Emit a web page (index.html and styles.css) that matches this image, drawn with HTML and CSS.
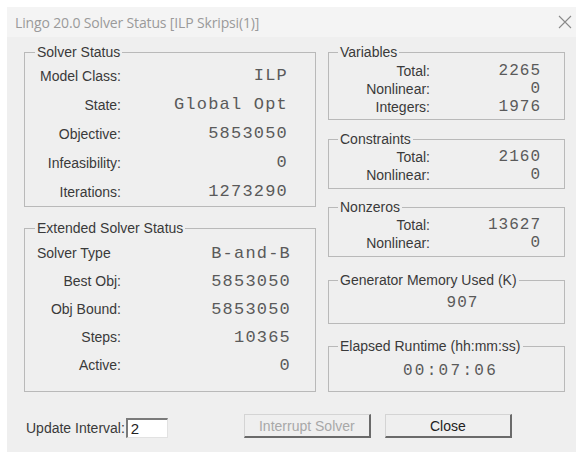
FILE: index.html
```html
<!DOCTYPE html>
<html lang="en">
<head>
<meta charset="utf-8">
<title>Lingo 20.0 Solver Status</title>
<link rel="stylesheet" href="styles.css">
</head>
<body>
<div class="screen">
  <div class="dialog">
    <div class="titlebar">
      <span class="title">Lingo 20.0 Solver Status [ILP Skripsi(1)]</span>
      <svg class="close-x" width="14" height="14" viewBox="0 0 14 14" aria-hidden="true">
        <path d="M1 1 L13 13 M13 1 L1 13" stroke="#8a8a8a" stroke-width="1.1" fill="none"/>
      </svg>
    </div>

    <div class="body">
      <div class="columns">
        <div class="col">
          <fieldset class="group status">
            <legend>Solver Status</legend>
            <div class="row"><span class="lbl">Model Class:</span><span class="val">ILP</span></div>
            <div class="row"><span class="lbl">State:</span><span class="val">Global Opt</span></div>
            <div class="row"><span class="lbl">Objective:</span><span class="val">5853050</span></div>
            <div class="row"><span class="lbl">Infeasibility:</span><span class="val">0</span></div>
            <div class="row"><span class="lbl">Iterations:</span><span class="val">1273290</span></div>
          </fieldset>

          <fieldset class="group extended">
            <legend>Extended Solver Status</legend>
            <div class="row"><span class="lbl lbl-left">Solver Type</span><span class="val">B-and-B</span></div>
            <div class="row"><span class="lbl">Best Obj:</span><span class="val">5853050</span></div>
            <div class="row"><span class="lbl">Obj Bound:</span><span class="val">5853050</span></div>
            <div class="row"><span class="lbl">Steps:</span><span class="val">10365</span></div>
            <div class="row"><span class="lbl">Active:</span><span class="val">0</span></div>
          </fieldset>
        </div>

        <div class="col">
          <fieldset class="group small variables">
            <legend>Variables</legend>
            <div class="row"><span class="lbl">Total:</span><span class="val">2265</span></div>
            <div class="row"><span class="lbl">Nonlinear:</span><span class="val">0</span></div>
            <div class="row"><span class="lbl">Integers:</span><span class="val">1976</span></div>
          </fieldset>

          <fieldset class="group small constraints">
            <legend>Constraints</legend>
            <div class="row"><span class="lbl">Total:</span><span class="val">2160</span></div>
            <div class="row"><span class="lbl">Nonlinear:</span><span class="val">0</span></div>
          </fieldset>

          <fieldset class="group small nonzeros">
            <legend>Nonzeros</legend>
            <div class="row"><span class="lbl">Total:</span><span class="val">13627</span></div>
            <div class="row"><span class="lbl">Nonlinear:</span><span class="val">0</span></div>
          </fieldset>

          <fieldset class="group single memory">
            <legend>Generator Memory Used (K)</legend>
            <div class="centered">907</div>
          </fieldset>

          <fieldset class="group single runtime">
            <legend>Elapsed Runtime (hh:mm:ss)</legend>
            <div class="centered">00:07:06</div>
          </fieldset>
        </div>
      </div>

      <div class="footer">
        <label class="interval-label" for="interval">Update Interval:</label>
        <input id="interval" class="interval" type="text" value="2">
        <div class="buttons">
          <button class="btn" disabled>Interrupt Solver</button>
          <button class="btn">Close</button>
        </div>
      </div>
    </div>
  </div>
</div>
</body>
</html>
```

FILE: styles.css
```css
* {
  box-sizing: border-box;
}

html, body {
  margin: 0;
  padding: 0;
  background: #ffffff;
}

.screen {
  width: 576px;
  height: 457px;
  padding: 7px 0 0 7px;
  background: #ffffff;
}

.dialog {
  width: 569px;
  height: 445px;
  background: #efefef;
  font-family: "Liberation Sans", Arial, sans-serif;
  color: #3a3a3a;
}

/* window caption */
.titlebar {
  height: 30px;
  background: #f4f4f4;
  display: flex;
  align-items: center;
  justify-content: space-between;
  padding: 0 4px 0 8px;
}

.title {
  font-family: "Open Sans", "Noto Sans", sans-serif;
  font-size: 14px;
  color: #9a9a9a;
  letter-spacing: -0.15px;
}

.close-x {
  display: block;
}

.body {
  padding: 8px 0 0 17px;
}

.columns {
  display: grid;
  grid-template-columns: 292px 237px;
  column-gap: 12px;
}

.col {
  display: flex;
  flex-direction: column;
}

/* group boxes */
.group {
  margin: 0;
  border: 1px solid #b9b9b9;
  padding: 0;
  min-width: 0;
}

.group legend {
  font-size: 14px;
  line-height: 14px;
  height: 14px;
  padding: 0 2px;
  margin-left: 9px;
  color: #3a3a3a;
}

.row {
  display: grid;
  align-items: center;
}

.lbl {
  font-size: 14px;
  text-align: right;
  color: #3a3a3a;
  white-space: nowrap;
}

.lbl-left {
  text-align: left;
}

.val {
  font-family: "Liberation Mono", "Courier New", monospace;
  text-align: right;
  color: #5a5a5a;
  white-space: pre;
}

/* left column */
.status,
.extended {
  padding-left: 12px;
  padding-right: 27px;
}

.status legend,
.extended legend {
  margin-left: -2px;
}

.status .row,
.extended .row {
  grid-template-columns: 84px 1fr;
}

.status .val,
.extended .val {
  font-size: 17px;
  letter-spacing: 1.2px;
}

.status {
  padding-top: 2px;
  padding-bottom: 0;
}

.status .row {
  height: 29px;
}

.extended {
  margin-top: 14px;
  padding-top: 4px;
  padding-bottom: 12px;
}

.extended .row {
  height: 28px;
}

.extended .val {
  margin-right: -3px;
}

/* right column */
.small {
  padding-left: 0;
  padding-right: 23px;
}

.small .row {
  height: 18px;
  grid-template-columns: 101px 1fr;
}

.small .val {
  font-size: 16px;
  letter-spacing: 1px;
}

.variables {
  padding-top: 3px;
  padding-bottom: 3px;
}

.constraints {
  margin-top: 12px;
  padding-top: 2px;
  padding-bottom: 4px;
}

.nonzeros {
  margin-top: 11px;
  padding-top: 2px;
  padding-bottom: 4px;
}

.single .centered {
  height: 18px;
  line-height: 18px;
  text-align: center;
  font-family: "Liberation Mono", "Courier New", monospace;
  font-size: 16px;
  letter-spacing: 1px;
  color: #5a5a5a;
}

.memory {
  margin-top: 16px;
  padding-top: 7px;
  padding-bottom: 11px;
}

.memory .centered {
  padding-left: 32px;
}

.runtime {
  margin-top: 15px;
  padding-top: 9px;
  padding-bottom: 11px;
}

.runtime .centered {
  padding-left: 8px;
  letter-spacing: 2.3px;
}

/* bottom bar */
.footer {
  display: flex;
  align-items: flex-end;
  margin-top: 22px;
  padding-left: 2px;
}

.interval-label {
  font-size: 14px;
  line-height: 20px;
  color: #3a3a3a;
  margin-right: 1px;
}

.interval {
  width: 42px;
  height: 20px;
  margin: 0;
  padding: 0 3px;
  background: #ffffff;
  border-top: 2px solid #7a7a7a;
  border-left: 2px solid #7a7a7a;
  border-right: 1px solid #e2e2e2;
  border-bottom: 1px solid #e2e2e2;
  font-family: "Liberation Sans", Arial, sans-serif;
  font-size: 15px;
  color: #222222;
  outline: none;
}

.buttons {
  display: flex;
  gap: 14px;
  margin-left: 76px;
}

.btn {
  width: 127px;
  height: 24px;
  margin: 0;
  padding: 0;
  background: #efefef;
  border-top: 1px solid #d4d4d4;
  border-left: 1px solid #d4d4d4;
  border-right: 2px solid #6a6a6a;
  border-bottom: 2px solid #6a6a6a;
  font-family: "Liberation Sans", Arial, sans-serif;
  font-size: 14px;
  color: #222222;
}

.btn:disabled {
  color: #a8a8a8;
}
```
